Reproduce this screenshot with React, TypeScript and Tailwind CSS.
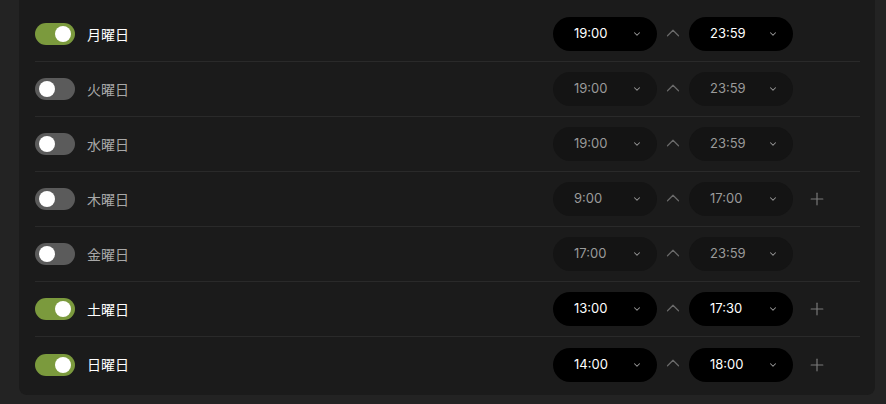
import { ChevronDown, ChevronUp, Plus } from "lucide-react";

type Day = { label: string; on: boolean; from: string; to: string; plus: boolean };

const days: Day[] = [
  { label: "月曜日", on: true, from: "19:00", to: "23:59", plus: false },
  { label: "火曜日", on: false, from: "19:00", to: "23:59", plus: false },
  { label: "水曜日", on: false, from: "19:00", to: "23:59", plus: false },
  { label: "木曜日", on: false, from: "9:00", to: "17:00", plus: true },
  { label: "金曜日", on: false, from: "17:00", to: "23:59", plus: false },
  { label: "土曜日", on: true, from: "13:00", to: "17:30", plus: true },
  { label: "日曜日", on: true, from: "14:00", to: "18:00", plus: true },
];

function Toggle({ on }: { on: boolean }) {
  return (
    <div
      className={`flex h-[22px] w-[40px] items-center rounded-full px-[4px] ${
        on ? "justify-end bg-[#7b9a3d]" : "justify-start bg-[#5b5b5b]"
      }`}
    >
      <div className="h-[16px] w-[16px] rounded-full bg-white" />
    </div>
  );
}

function TimePill({ value, on }: { value: string; on: boolean }) {
  return (
    <div
      className={`flex h-[34px] w-[104px] items-center justify-between rounded-full pl-[21px] pr-[15px] text-[13px] ${
        on ? "bg-black text-white" : "bg-[#141414] text-[#9a9a9a]"
      }`}
    >
      <span>{value}</span>
      <ChevronDown className="h-[10px] w-[10px] text-[#9a9a9a]" strokeWidth={2.5} />
    </div>
  );
}

export default function App() {
  return (
    <div className="min-h-[404px] w-full bg-[#232323] pl-[19px] pr-[11px]" style={{ fontFamily: "Inter, 'Noto Sans CJK JP', sans-serif" }}>
      <div className="rounded-b-lg bg-[#1b1b1b] pb-[3px] pl-[16px] pr-[15px] pt-[7px]">
        {days.map((d, i) => (
          <div
            key={d.label}
            className={`flex h-[55px] items-center ${i < days.length - 1 ? "border-b border-[#2a2a2a]" : ""}`}
          >
            <Toggle on={d.on} />
            <span
              className={`ml-[12px] text-[14px] ${d.on ? "font-normal text-white" : "text-[#a8a8a8]"}`}
              style={{ fontFamily: "'Noto Sans CJK JP', sans-serif" }}
            >
              {d.label}
            </span>
            <div className="ml-auto flex w-[307px] items-center">
              <TimePill value={d.from} on={d.on} />
              <ChevronUp className="mx-[5px] -mt-[3px] h-[22px] w-[22px] text-[#6a6a6a]" strokeWidth={1.3} />
              <TimePill value={d.to} on={d.on} />
              {d.plus && <Plus className="ml-[14px] h-[20px] w-[20px] text-[#7a7a7a]" strokeWidth={1.4} />}
            </div>
          </div>
        ))}
      </div>
    </div>
  );
}
